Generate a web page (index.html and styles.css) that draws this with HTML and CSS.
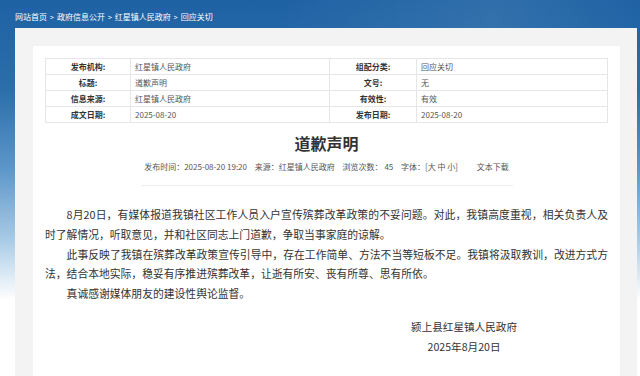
FILE: index.html
```html
<!DOCTYPE html>
<html lang="zh-CN">
<head>
  <meta charset="UTF-8" />
  <meta name="viewport" content="width=device-width, initial-scale=1.0"/>
  <title>道歉声明 - 红星镇人民政府</title>
  <link rel="stylesheet" href="styles.css">
</head>
<body>

  <!-- 面包屑 -->
  <div class="crumb">
    <a href="#">网站首页</a><span class="sep">&gt;</span><a href="#">政府信息公开</a><span class="sep">&gt;</span><a href="#">红星镇人民政府</a><span class="sep">&gt;</span><a href="#">回应关切</a>
  </div>

  <div class="panel">
    <div class="card">

      <table class="info">
        <tr>
          <th>发布机构:</th><td>红星镇人民政府</td>
          <th>组配分类:</th><td>回应关切</td>
        </tr>
        <tr>
          <th>标题:</th><td>道歉声明</td>
          <th>文号:</th><td>无</td>
        </tr>
        <tr>
          <th>信息来源:</th><td>红星镇人民政府</td>
          <th>有效性:</th><td>有效</td>
        </tr>
        <tr>
          <th>成文日期:</th><td>2025-08-20</td>
          <th>发布日期:</th><td>2025-08-20</td>
        </tr>
      </table>

      <h1 class="title">道歉声明</h1>

      <div class="meta">
        <span>发布时间：2025-08-20 19:20</span>
        <span>来源：红星镇人民政府</span>
        <span>浏览次数： 45</span>
        <span>字体：[大 中 小]</span>
        <span class="download">文本下载</span>
      </div>

      <div class="content">
        <p>8月20日，有媒体报道我镇社区工作人员入户宣传殡葬改革政策的不妥问题。对此，我镇高度重视，相关负责人及时了解情况，听取意见，并和社区同志上门道歉，争取当事家庭的谅解。</p>
        <p>此事反映了我镇在殡葬改革政策宣传引导中，存在工作简单、方法不当等短板不足。我镇将汲取教训，改进方式方法，结合本地实际，稳妥有序推进殡葬改革，让逝有所安、丧有所尊、思有所依。</p>
        <p>真诚感谢媒体朋友的建设性舆论监督。</p>
      </div>

      <div class="sign">
        <div class="sign-box">
          <div>颍上县红星镇人民政府</div>
          <div>2025年8月20日</div>
        </div>
      </div>

    </div>
  </div>

</body>
</html>
```

FILE: styles.css
```css
:root {
  --blue: #2466a6;
  --panel: #f3f3f3;
  --line: #e6e6e6;
  --text: #333333;
  --muted: #555555;
}

body {
  margin: 0;
  padding: 0;
  font-family: "Noto Sans CJK SC", "Noto Sans", sans-serif;
  color: var(--text);
  background:
    linear-gradient(100deg, rgba(255,255,255,0) 40%, rgba(255,255,255,0.08) 70%, rgba(255,255,255,0) 90%),
    linear-gradient(to bottom, #1f62a4 0px, #2b6eab 90px, #5e97c9 170px, #a9cbe6 240px, #ffffff 300px);
  background-repeat: no-repeat;
  min-height: 376px;
}

.crumb {
  height: 28px;
  box-sizing: border-box;
  padding: 12px 15px 0;
  font-size: 8px;
  line-height: 10px;
  color: #fff;
}

.crumb a {
  color: #fff;
  text-decoration: none;
}

.crumb .sep {
  margin: 0 3px;
  font-size: 7px;
}

.panel {
  margin: 0 3px 0 15px;
  background-color: var(--panel);
  padding: 18px 17px 0 18px;
}

.card {
  background-color: #fff;
  padding: 12px 12px 40px;
}

/* 信息表 */
.info {
  width: 100%;
  border-collapse: collapse;
  font-size: 8px;
  table-layout: fixed;
}

.info th,
.info td {
  border: 1px solid var(--line);
  height: 15px;
  padding: 0;
  line-height: 15px;
}

.info th {
  text-align: center;
  font-weight: bold;
  color: var(--text);
}

.info td {
  padding-left: 4px;
  color: var(--muted);
}

.info th:nth-child(1) { width: 84px; }
.info td:nth-child(2) { width: 194px; }
.info th:nth-child(3) { width: 86px; }

.title {
  margin: 10px 0 0;
  font-size: 16px;
  line-height: 20px;
  text-align: center;
  color: var(--text);
}

.meta {
  width: 372px;
  margin: 8px auto 0;
  padding-bottom: 12px;
  border-bottom: 1px solid #eeeeee;
  font-size: 8px;
  line-height: 12px;
  color: var(--muted);
  text-align: center;
  white-space: nowrap;
}

.meta span {
  margin: 0 3px;
}

.meta .download {
  margin-left: 14px;
}

.content {
  margin-top: 19px;
  font-size: 10.8px;
  line-height: 19.8px;
  color: var(--text);
}

.content p {
  margin: 0;
  text-indent: 2em;
  text-align: justify;
}

.sign {
  margin-top: 13px;
  text-align: right;
  padding-right: 91px;
  font-size: 10.6px;
  line-height: 20px;
}

.sign-box {
  display: inline-block;
  text-align: center;
}
```
